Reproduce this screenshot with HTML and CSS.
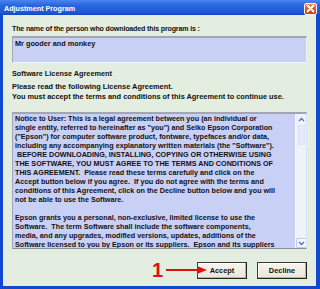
FILE: index.html
```html
<!DOCTYPE html>
<html lang="en">
<head>
    <meta charset="UTF-8">
    <title>Adjustment Program</title>
    <link rel="stylesheet" href="styles.css">
</head>
<body>
    <div class="window">
        <div class="titlebar">
            <span class="title">Adjustment Program</span>
            <span class="close-btn">
                <svg width="9" height="9" viewBox="0 0 9 9">
                    <path d="M1.5 1.5 L7.5 7.5 M7.5 1.5 L1.5 7.5" stroke="#fff" stroke-width="1.8" stroke-linecap="round"/>
                </svg>
            </span>
        </div>

        <div class="client">
            <p class="label">The name of the person who downloaded this program is :</p>
            <div class="name-box">Mr gooder and monkey</div>

            <p class="heading">Software License Agreement</p>
            <p class="note">Please read the following License Agreement.<br>You must accept the terms and conditions of this Agreement to continue use.</p>

            <div class="license-box">
<p class="license-text">Notice to User: This is a legal agreement between you (an individual or
single entity, referred to hereinafter as "you") and Seiko Epson Corporation
("Epson") for computer software product, fontware, typefaces and/or data,
including any accompanying explanatory written materials (the "Software").
 BEFORE DOWNLOADING, INSTALLING, COPYING OR OTHERWISE USING
THE SOFTWARE, YOU MUST AGREE TO THE TERMS AND CONDITIONS OF
THIS AGREEMENT.  Please read these terms carefully and click on the
Accept button below if you agree.  If you do not agree with the terms and
conditions of this Agreement, click on the Decline button below and you will
not be able to use the Software.

Epson grants you a personal, non-exclusive, limited license to use the
Software.  The term Software shall include the software components,
media, and any upgrades, modified versions, updates, additions of the
Software licensed to you by Epson or its suppliers.  Epson and its suppliers</p>
                <div class="scrollbar">
                    <span class="scroll-up">
                        <svg width="7" height="5" viewBox="0 0 7 5"><path d="M1 4 L3.5 1.5 L6 4" fill="none" stroke="#4d6fc4" stroke-width="1.3"/></svg>
                    </span>
                    <span class="scroll-thumb"></span>
                    <span class="scroll-down">
                        <svg width="7" height="5" viewBox="0 0 7 5"><path d="M1 1 L3.5 3.5 L6 1" fill="none" stroke="#4d6fc4" stroke-width="1.3"/></svg>
                    </span>
                </div>
            </div>

            <div class="actions">
                <div class="marker">
                    <span class="marker-num">1</span>
                    <svg class="marker-arrow" width="42" height="10" viewBox="0 0 42 10">
                        <path d="M0 5 L33 5" stroke="#e01010" stroke-width="2"/>
                        <path d="M31 1 L41 5 L31 9 Z" fill="#e01010"/>
                    </svg>
                </div>
                <button class="btn">Accept</button>
                <button class="btn">Decline</button>
            </div>
        </div>
    </div>
</body>
</html>
```

FILE: styles.css
```css
* {
    margin: 0;
    padding: 0;
    box-sizing: border-box;
}

body {
    font-family: "Liberation Sans", Arial, sans-serif;
    font-weight: bold;
    color: #111;
    background: #fff;
}

.window {
    width: 320px;
    height: 289px;
    background: #1148d0;
    display: flex;
    flex-direction: column;
    padding: 0 4px 3px 3px;
}

.titlebar {
    height: 15px;
    margin: 0 -4px 0 -3px;
    padding: 0 3px 0 4px;
    background: linear-gradient(#4a86f2 0%, #2a66dc 35%, #1f5ad6 80%, #1446c4 100%);
    display: flex;
    align-items: center;
    justify-content: space-between;
}

.title {
    color: #fff;
    font-size: 7.2px;
    padding-top: 1px;
}

.close-btn {
    width: 13px;
    height: 12px;
    margin-top: 2px;
    border: 1px solid #f4f4f4;
    border-radius: 2px;
    background: linear-gradient(#ea8a62, #d4502a 60%, #c24020);
    display: flex;
    align-items: center;
    justify-content: center;
}

.client {
    flex: 1;
    background: #e3eee0;
    padding: 10px 9px 7px 9px;
    font-size: 7.3px;
}

.label {
    line-height: 9px;
    margin-bottom: 2px;
    font-size: 7.1px;
    letter-spacing: -0.17px;
}

.name-box {
    height: 27px;
    background: #c9d0f5;
    border-top: 2px solid #a2a6b4;
    border-left: 1px solid #a2a6b4;
    border-right: 1px solid #f2f4fb;
    border-bottom: 1px solid #f2f4fb;
    padding: 1px 2px;
    line-height: 9px;
}

.heading {
    margin-top: 6px;
    line-height: 9px;
}

.note {
    margin-top: 4px;
    line-height: 10px;
    font-size: 7.4px;
}

.license-box {
    margin-top: 10px;
    height: 137px;
    background: #c9d0f5;
    border-top: 2px solid #a2a6b4;
    border-left: 1px solid #a2a6b4;
    border-right: 1px solid #dfe3f5;
    border-bottom: 1px solid #8c90a0;
    display: flex;
    overflow: hidden;
}

.license-text {
    flex: 1;
    white-space: pre;
    line-height: 9px;
    font-size: 7.2px;
    padding-left: 2px;
    overflow: hidden;
}

.scrollbar {
    width: 11px;
    background: #eef2f9;
    display: flex;
    flex-direction: column;
    align-items: center;
    border-left: 1px solid #f6f8fc;
}

.scroll-up,
.scroll-down {
    width: 11px;
    height: 10px;
    display: flex;
    align-items: center;
    justify-content: center;
}

.scroll-down {
    margin-top: auto;
    border: 1px solid #c2cbe4;
    border-radius: 1px;
    background: #f3f6fc;
}

.scroll-thumb {
    width: 7px;
    height: 20px;
    margin-top: 1px;
    background: #e4eaf7;
    border: 1px dotted #d2dbef;
}

.actions {
    position: relative;
    margin-top: 13px;
    display: flex;
    justify-content: flex-end;
    gap: 10px;
}

.btn {
    width: 50px;
    height: 17px;
    font-family: "Liberation Sans", Arial, sans-serif;
    font-weight: bold;
    font-size: 7.4px;
    color: #111;
    background: linear-gradient(#f6f4ec, #e9e6d8);
    border: 1px solid #3a3a3a;
    border-right-color: #202020;
    border-bottom-color: #202020;
    box-shadow: inset -1px -1px 0 #b8b4a4, inset 1px 1px 0 #ffffff;
}

.marker {
    position: absolute;
    left: 140px;
    top: -3px;
    display: flex;
    align-items: center;
    z-index: 2;
}

.marker-num {
    color: #e01010;
    font-size: 20px;
    line-height: 22px;
}

.marker-arrow {
    margin-left: 3px;
}
```
